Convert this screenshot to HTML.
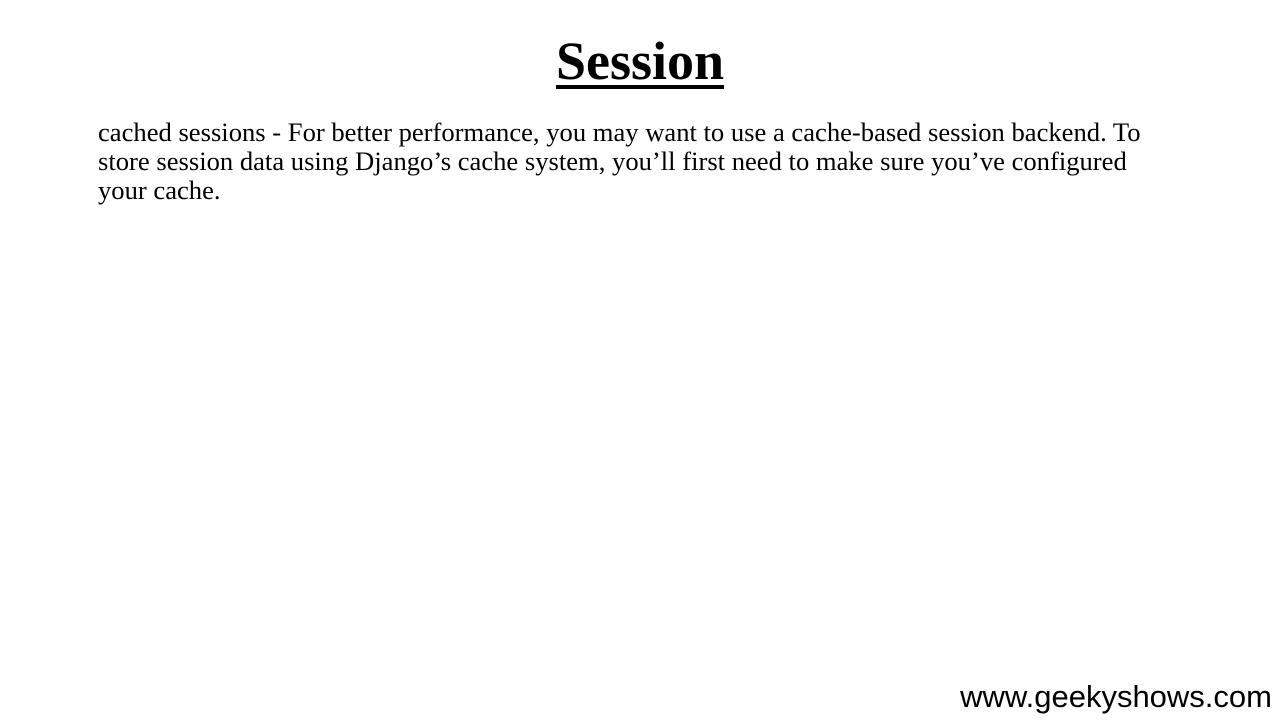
<!DOCTYPE html>
<html><head><style>
html,body{margin:0;padding:0;background:#fff;width:1280px;height:720px;overflow:hidden;position:relative}
h1{position:absolute;left:0;width:1280px;top:28px;margin:0;text-align:center;font:bold 54px "Liberation Serif",serif;line-height:66px}
h1 span{text-decoration:underline;text-decoration-thickness:4px;text-underline-offset:6px}
p{position:absolute;left:98px;top:118px;width:1160px;margin:0;font:26.6px "Liberation Serif",serif;line-height:29px;color:#000;white-space:nowrap}
.w{position:absolute;right:8px;top:679px;font:31px "Liberation Sans",sans-serif;color:#000}
</style></head><body>
<h1><span>Session</span></h1>
<p>cached sessions - For better performance, you may want to use a cache-based session backend. To<br>store session data using Django’s cache system, you’ll first need to make sure you’ve configured<br>your cache.</p>
<div class="w">www.geekyshows.com</div>
</body></html>
